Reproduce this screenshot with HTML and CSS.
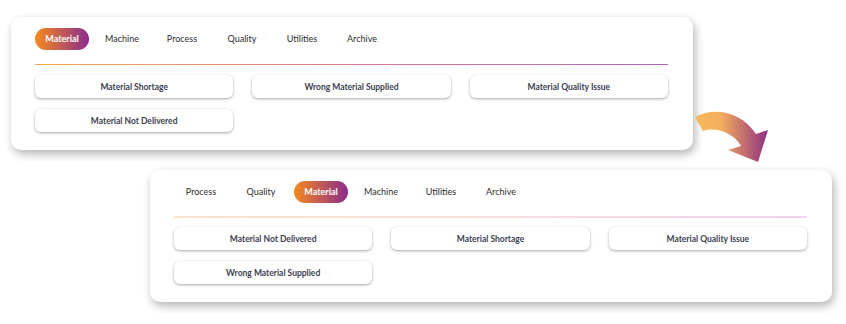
FILE: index.html
```html
<!DOCTYPE html>
<html lang="en">
  <head>
    <meta charset="UTF-8" />
    <title>Reason Tabs</title>
    <link rel="stylesheet" href="styles.css">
  </head>
  <body>
    <div class="canvas">
      <!-- Before: default tab order -->
      <div class="panel panel-before">
        <div class="tabs">
          <span class="tab active">Material</span>
          <span class="tab">Machine</span>
          <span class="tab">Process</span>
          <span class="tab">Quality</span>
          <span class="tab">Utilities</span>
          <span class="tab">Archive</span>
        </div>
        <div class="divider"></div>
        <div class="reasons">
          <button class="reason">Material Shortage</button>
          <button class="reason">Wrong Material Supplied</button>
          <button class="reason">Material Quality Issue</button>
          <button class="reason">Material Not Delivered</button>
        </div>
      </div>

      <!-- Arrow -->
      <svg class="arrow" width="85" height="62" viewBox="0 0 85 62">
        <defs>
          <linearGradient id="arrowGrad" x1="0" y1="0" x2="1" y2="0">
            <stop offset="0" stop-color="#f8b85c" />
            <stop offset="0.35" stop-color="#f4ae5e" />
            <stop offset="1" stop-color="#8f2f82" />
          </linearGradient>
        </defs>
        <path
          d="M5 12 C25 1 52 7 66 29 L78 25 L68 57 L38 45 L51 41 C45 30 28 21 13 26 Z"
          fill="url(#arrowGrad)"
        />
      </svg>

      <!-- After: reordered tabs -->
      <div class="panel panel-after">
        <div class="tabs">
          <span class="tab">Process</span>
          <span class="tab">Quality</span>
          <span class="tab active">Material</span>
          <span class="tab">Machine</span>
          <span class="tab">Utilities</span>
          <span class="tab">Archive</span>
        </div>
        <div class="divider faded"></div>
        <div class="reasons">
          <button class="reason">Material Not Delivered</button>
          <button class="reason">Material Shortage</button>
          <button class="reason">Material Quality Issue</button>
          <button class="reason">Wrong Material Supplied</button>
        </div>
      </div>
    </div>
  </body>
</html>
```
FILE: styles.css
```css
* {
  box-sizing: border-box;
}
html,
body {
  margin: 0;
  height: 100%;
}
body {
  font-family: Lato, "Open Sans", sans-serif;
  background: #ffffff;
  color: #333;
}
.canvas {
  position: relative;
  width: 846px;
  height: 324px;
  overflow: hidden;
  padding-top: 17px;
}
.panel {
  width: 682px;
  background-color: #fff;
  border-radius: 10px;
  box-shadow: 2px 4px 10px rgba(0, 0, 0, 0.3);
  padding: 11px 25px 18px 24px;
}
.panel-before {
  margin-left: 11px;
}
.panel-after {
  margin-left: 150px;
  margin-top: 20px;
}
.tabs {
  display: grid;
  grid-template-columns: repeat(6, 54px);
  column-gap: 6px;
}
.tab {
  height: 22px;
  line-height: 22px;
  text-align: center;
  font-size: 9px;
  color: #2d2d2d;
  border-radius: 11px;
}
.tab.active {
  background: linear-gradient(to right, #f5891f, #8b2b8c);
  color: #fff;
  font-weight: bold;
}
.divider {
  height: 1px;
  margin: 14px 0 10px;
  background: linear-gradient(to right, #f7a74d, #d87a8e 50%, #b366b8);
}
.divider.faded {
  height: 2px;
  margin: 13px 0 9px;
  background: linear-gradient(to right, #fde3cc, #f8dcdc 50%, #efd3ef);
}
.reasons {
  display: grid;
  grid-template-columns: repeat(3, 1fr);
  column-gap: 19px;
  row-gap: 11px;
}
.reason {
  height: 23px;
  background: #fff;
  border: none;
  border-radius: 6px;
  box-shadow: 0 1px 3px rgba(0, 0, 0, 0.35);
  font-family: Lato, "Open Sans", sans-serif;
  font-size: 8.5px;
  font-weight: bold;
  color: #3b4150;
  padding: 0;
  cursor: pointer;
}
.arrow {
  position: absolute;
  left: 690px;
  top: 105px;
}
```
